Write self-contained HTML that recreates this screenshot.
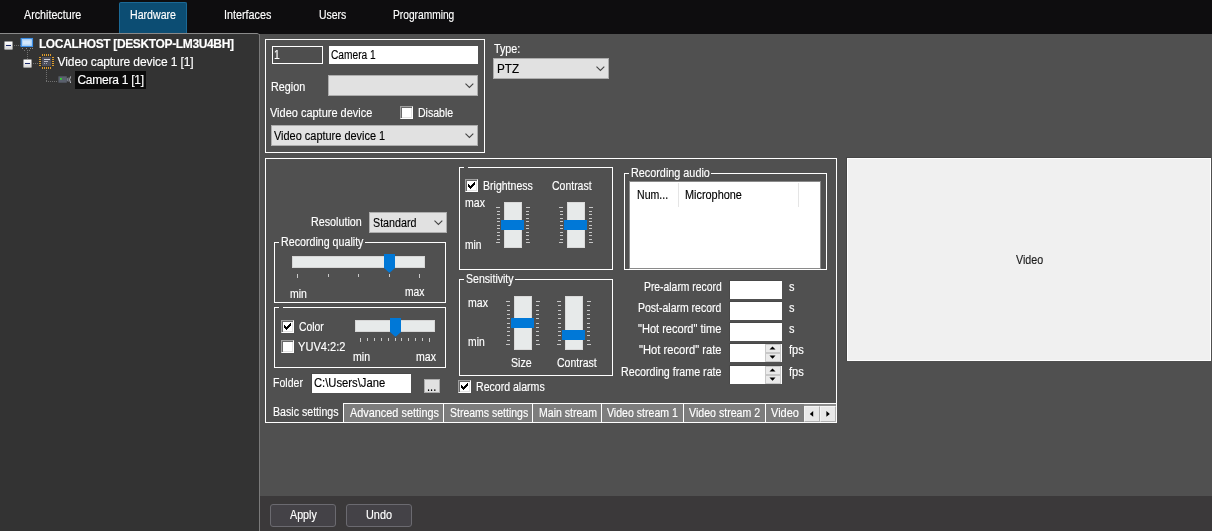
<!DOCTYPE html>
<html lang="en"><head><meta charset="utf-8"><title>Camera settings</title>
<style>
html,body{margin:0;padding:0}
body{width:1212px;height:531px;position:relative;overflow:hidden;background:#505050;font-family:'Liberation Sans', sans-serif;}
body div{position:absolute;}
.rg{display:block;position:absolute;left:0;top:0;width:0;height:0;}
.labels{left:0;top:0;width:1212px;height:531px;will-change:transform;}
.t{position:absolute;white-space:pre;font-family:'Liberation Sans', sans-serif;font-size:12px;line-height:14px;transform-origin:0 0;-webkit-text-stroke:0.15px currentColor;}
</style></head><body>
<nav class="rg" aria-label="Sections">
<div style="left:0px;top:0px;width:1212px;height:34px;background:#0e0d0f"></div>
<div style="left:119px;top:2px;width:68px;height:32px;background:#0c4d73;border:1px solid #1b6996;border-bottom:none;border-radius:2px 2px 0 0;box-sizing:border-box"></div>
<div class="labels">
<span class="t" style="left:24.4px;top:8px;color:#fff;transform:scaleX(0.893);">Architecture</span>
<span class="t" style="left:129.8px;top:8px;color:#fff;transform:scaleX(0.884);">Hardware</span>
<span class="t" style="left:223.7px;top:8px;color:#fff;transform:scaleX(0.899);">Interfaces</span>
<span class="t" style="left:318.8px;top:8px;color:#fff;transform:scaleX(0.871);">Users</span>
<span class="t" style="left:393.4px;top:8px;color:#fff;transform:scaleX(0.851);">Programming</span>
</div>
</nav>
<aside class="rg" aria-label="Object tree">
<div style="left:0px;top:33px;width:259px;height:498px;background:#333333;border-top:1px solid #8a8a8a;border-top-right-radius:2px;box-sizing:border-box"></div>
<div style="left:75px;top:71px;width:71px;height:18px;background:#0b0b0b"></div>
<div style="left:14px;top:45px;width:7px;height:1px;background:repeating-linear-gradient(90deg,#707070 0 1px,transparent 1px 2px)"></div>
<div style="left:27px;top:50px;width:1px;height:9px;background:repeating-linear-gradient(180deg,#707070 0 1px,transparent 1px 2px)"></div>
<div style="left:33px;top:63px;width:5px;height:1px;background:repeating-linear-gradient(90deg,#707070 0 1px,transparent 1px 2px)"></div>
<div style="left:46px;top:70px;width:1px;height:12px;background:repeating-linear-gradient(180deg,#707070 0 1px,transparent 1px 2px)"></div>
<div style="left:46px;top:81px;width:12px;height:1px;background:repeating-linear-gradient(90deg,#707070 0 1px,transparent 1px 2px)"></div>
<div style="left:4px;top:41px;width:9px;height:9px;background:linear-gradient(#fff,#d8d8d8);border:1px solid #9a9a9a;box-sizing:border-box;border-radius:1px"><div style="left:1px;top:3px;width:5px;height:1px;background:#1c2a6b"></div></div>
<div style="left:23px;top:59px;width:9px;height:9px;background:linear-gradient(#fff,#d8d8d8);border:1px solid #9a9a9a;box-sizing:border-box;border-radius:1px"><div style="left:1px;top:3px;width:5px;height:1px;background:#1c2a6b"></div></div>
<svg style="position:absolute;left:20px;top:37px" width="15" height="15" viewBox="0 0 15 15"><rect x="1.2" y="1.6" width="11.2" height="7.8" fill="#d3e7fa" stroke="#3c8ee6" stroke-width="1.3"/><rect x="2.6" y="3" width="8.4" height="5" fill="none" stroke="#a8cff4" stroke-width=".8"/><rect x="2" y="11" width="1" height="1" fill="#8a8a8a"/><rect x="6" y="11" width="1" height="1" fill="#8a8a8a"/><rect x="10" y="11" width="1" height="1" fill="#8a8a8a"/><rect x="12" y="11" width="1" height="1" fill="#8a8a8a"/><rect x="4" y="13" width="1" height="1" fill="#777"/><rect x="9" y="13" width="1" height="1" fill="#777"/></svg>
<svg style="position:absolute;left:38px;top:53px" width="17" height="17" viewBox="0 0 17 17" shape-rendering="crispEdges"><rect x="4" y="1" width="1" height="2" fill="#dc9c2c"/><rect x="4" y="14" width="1" height="2" fill="#dc9c2c"/><rect x="1" y="4" width="2" height="1" fill="#dc9c2c"/><rect x="14" y="4" width="2" height="1" fill="#dc9c2c"/><rect x="6" y="1" width="1" height="2" fill="#dc9c2c"/><rect x="6" y="14" width="1" height="2" fill="#dc9c2c"/><rect x="1" y="6" width="2" height="1" fill="#dc9c2c"/><rect x="14" y="6" width="2" height="1" fill="#dc9c2c"/><rect x="8" y="1" width="1" height="2" fill="#dc9c2c"/><rect x="8" y="14" width="1" height="2" fill="#dc9c2c"/><rect x="1" y="8" width="2" height="1" fill="#dc9c2c"/><rect x="14" y="8" width="2" height="1" fill="#dc9c2c"/><rect x="10" y="1" width="1" height="2" fill="#dc9c2c"/><rect x="10" y="14" width="1" height="2" fill="#dc9c2c"/><rect x="1" y="10" width="2" height="1" fill="#dc9c2c"/><rect x="14" y="10" width="2" height="1" fill="#dc9c2c"/><rect x="12" y="1" width="1" height="2" fill="#dc9c2c"/><rect x="12" y="14" width="1" height="2" fill="#dc9c2c"/><rect x="1" y="12" width="2" height="1" fill="#dc9c2c"/><rect x="14" y="12" width="2" height="1" fill="#dc9c2c"/><rect x="4" y="4" width="9" height="9" fill="#4d4f5c"/><rect x="6" y="6" width="6" height="1" fill="#d4d4dc"/><rect x="6" y="8" width="4" height="1" fill="#b9b9c4"/><rect x="6" y="10" width="1" height="1" fill="#a8a8b4"/><rect x="8" y="10" width="1" height="1" fill="#a8a8b4"/></svg>
<svg style="position:absolute;left:58px;top:75px" width="15" height="10" viewBox="0 0 15 10"><rect x="0.4" y="1.3" width="8.4" height="6.4" fill="#5a606d"/><path d="M8.8 3.4 L10.6 2.2 V7 L8.8 5.8 Z" fill="#777c88"/><path d="M12.6 1.4 Q10.6 4.5 12.6 8" fill="none" stroke="#c9ccd2" stroke-width=".9"/><rect x="2" y="3" width="1.8" height="1.8" fill="#35d835"/></svg>
<div class="labels">
<span class="t" style="left:38.9px;top:37px;letter-spacing:-0.36px;color:#ffffff;font-weight:700;">LOCALHOST [DESKTOP-LM3U4BH]</span>
<span class="t" style="left:57.6px;top:55px;letter-spacing:-0.10px;color:#fff;">Video capture device 1 [1]</span>
<span class="t" style="left:77.4px;top:73px;letter-spacing:-0.24px;color:#fff;">Camera 1 [1]</span>
</div>
</aside>
<main class="rg" aria-label="Camera settings">
<div style="left:259px;top:34px;width:1px;height:497px;background:#7a7a7a"></div>
<div style="left:265px;top:39px;width:220px;height:114px;border:1px solid #fff;box-sizing:border-box"></div>
<div style="left:265px;top:158px;width:572px;height:265px;border:1px solid #fff;box-sizing:border-box"></div>
<div style="left:274px;top:242px;width:172px;height:61px;border:1px solid #fff;box-sizing:border-box"></div><div style="left:279px;top:242px;width:86px;height:1px;background:#505050"></div>
<div style="left:274px;top:307px;width:172px;height:61px;border:1px solid #fff;box-sizing:border-box"></div><div style="left:279px;top:307px;width:4px;height:1px;background:#505050"></div>
<div style="left:459px;top:167px;width:154px;height:103px;border:1px solid #fff;box-sizing:border-box"></div><div style="left:464px;top:167px;width:4px;height:1px;background:#505050"></div>
<div style="left:459px;top:279px;width:154px;height:97px;border:1px solid #fff;box-sizing:border-box"></div><div style="left:464px;top:279px;width:51px;height:1px;background:#505050"></div>
<div style="left:624px;top:173px;width:203px;height:97px;border:1px solid #fff;box-sizing:border-box"></div><div style="left:629px;top:173px;width:82px;height:1px;background:#505050"></div>
<div style="left:272px;top:46px;width:51px;height:18px;border:1px solid #fff;background:#4e4e4e;box-sizing:border-box"></div>
<div style="left:329px;top:46px;width:149px;height:18px;background:#fff"></div>
<div style="left:328px;top:75px;width:150px;height:21px;background:#e1e1e1;border:1px solid #adadad;box-sizing:border-box"><svg style="position:absolute;left:135px;top:5.5px" width="11" height="8" viewBox="0 0 11 8"><path d="M1.5 1.6 L5.4 5.5 L9.3 1.6" fill="none" stroke="#444" stroke-width="1.1"/></svg></div>
<div style="left:271px;top:125px;width:207px;height:21px;background:#e1e1e1;border:1px solid #adadad;box-sizing:border-box"><svg style="position:absolute;left:192px;top:5.5px" width="11" height="8" viewBox="0 0 11 8"><path d="M1.5 1.6 L5.4 5.5 L9.3 1.6" fill="none" stroke="#444" stroke-width="1.1"/></svg></div>
<div style="left:493px;top:58px;width:116px;height:21px;background:#e1e1e1;border:1px solid #adadad;box-sizing:border-box"><svg style="position:absolute;left:101px;top:5.5px" width="11" height="8" viewBox="0 0 11 8"><path d="M1.5 1.6 L5.4 5.5 L9.3 1.6" fill="none" stroke="#444" stroke-width="1.1"/></svg></div>
<div style="left:369px;top:212px;width:78px;height:21px;background:#e1e1e1;border:1px solid #adadad;box-sizing:border-box"><svg style="position:absolute;left:63px;top:5.5px" width="11" height="8" viewBox="0 0 11 8"><path d="M1.5 1.6 L5.4 5.5 L9.3 1.6" fill="none" stroke="#444" stroke-width="1.1"/></svg></div>
<div style="left:400px;top:106px;width:13px;height:13px;background:#fff;border-style:solid;border-width:1px;border-color:#a0a0a0 #fff #fff #a0a0a0;box-sizing:border-box;box-shadow:inset 1px 1px 0 #696969, inset -1px -1px 0 #e3e3e3"></div>
<div style="left:281px;top:320px;width:13px;height:13px;background:#fff;border-style:solid;border-width:1px;border-color:#a0a0a0 #fff #fff #a0a0a0;box-sizing:border-box;box-shadow:inset 1px 1px 0 #696969, inset -1px -1px 0 #e3e3e3"><svg width="13" height="13" viewBox="0 0 13 13" shape-rendering="crispEdges" style="position:absolute;left:-1px;top:-1px"><rect x="3" y="5" width="1" height="3" fill="#000"/><rect x="4" y="6" width="1" height="3" fill="#000"/><rect x="5" y="7" width="1" height="3" fill="#000"/><rect x="6" y="6" width="1" height="3" fill="#000"/><rect x="7" y="5" width="1" height="3" fill="#000"/><rect x="8" y="4" width="1" height="3" fill="#000"/><rect x="9" y="3" width="1" height="3" fill="#000"/></svg></div>
<div style="left:281px;top:340px;width:13px;height:13px;background:#fff;border-style:solid;border-width:1px;border-color:#a0a0a0 #fff #fff #a0a0a0;box-sizing:border-box;box-shadow:inset 1px 1px 0 #696969, inset -1px -1px 0 #e3e3e3"></div>
<div style="left:465px;top:179px;width:13px;height:13px;background:#fff;border-style:solid;border-width:1px;border-color:#a0a0a0 #fff #fff #a0a0a0;box-sizing:border-box;box-shadow:inset 1px 1px 0 #696969, inset -1px -1px 0 #e3e3e3"><svg width="13" height="13" viewBox="0 0 13 13" shape-rendering="crispEdges" style="position:absolute;left:-1px;top:-1px"><rect x="3" y="5" width="1" height="3" fill="#000"/><rect x="4" y="6" width="1" height="3" fill="#000"/><rect x="5" y="7" width="1" height="3" fill="#000"/><rect x="6" y="6" width="1" height="3" fill="#000"/><rect x="7" y="5" width="1" height="3" fill="#000"/><rect x="8" y="4" width="1" height="3" fill="#000"/><rect x="9" y="3" width="1" height="3" fill="#000"/></svg></div>
<div style="left:458px;top:380px;width:13px;height:13px;background:#fff;border-style:solid;border-width:1px;border-color:#a0a0a0 #fff #fff #a0a0a0;box-sizing:border-box;box-shadow:inset 1px 1px 0 #696969, inset -1px -1px 0 #e3e3e3"><svg width="13" height="13" viewBox="0 0 13 13" shape-rendering="crispEdges" style="position:absolute;left:-1px;top:-1px"><rect x="3" y="5" width="1" height="3" fill="#000"/><rect x="4" y="6" width="1" height="3" fill="#000"/><rect x="5" y="7" width="1" height="3" fill="#000"/><rect x="6" y="6" width="1" height="3" fill="#000"/><rect x="7" y="5" width="1" height="3" fill="#000"/><rect x="8" y="4" width="1" height="3" fill="#000"/><rect x="9" y="3" width="1" height="3" fill="#000"/></svg></div>
<div style="left:292px;top:256px;width:133px;height:12px;background:#e7eaea;border:1px solid #d6d6d6;box-sizing:border-box"></div><svg style="position:absolute;left:384px;top:254px" width="11" height="19" viewBox="0 0 11 19"><path d="M0 0 H11 V14 L6.0 18.5 L5.0 18.5 L0 14 Z" fill="#0078d7"/></svg><div style="left:297px;top:274px;width:1px;height:4px;background:#c9c9c9"></div><div style="left:328px;top:274px;width:1px;height:3px;background:#c9c9c9"></div><div style="left:358px;top:274px;width:1px;height:3px;background:#c9c9c9"></div><div style="left:389px;top:274px;width:1px;height:3px;background:#c9c9c9"></div><div style="left:419px;top:274px;width:1px;height:4px;background:#c9c9c9"></div>
<div style="left:355px;top:320px;width:80px;height:12px;background:#e7eaea;border:1px solid #d6d6d6;box-sizing:border-box"></div><svg style="position:absolute;left:390px;top:318px" width="11" height="19" viewBox="0 0 11 19"><path d="M0 0 H11 V14 L6.0 18.5 L5.0 18.5 L0 14 Z" fill="#0078d7"/></svg><div style="left:360px;top:338px;width:1px;height:4px;background:#c9c9c9"></div><div style="left:367px;top:338px;width:1px;height:3px;background:#c9c9c9"></div><div style="left:374px;top:338px;width:1px;height:3px;background:#c9c9c9"></div><div style="left:381px;top:338px;width:1px;height:3px;background:#c9c9c9"></div><div style="left:388px;top:338px;width:1px;height:3px;background:#c9c9c9"></div><div style="left:395px;top:338px;width:1px;height:3px;background:#c9c9c9"></div><div style="left:401px;top:338px;width:1px;height:3px;background:#c9c9c9"></div><div style="left:408px;top:338px;width:1px;height:3px;background:#c9c9c9"></div><div style="left:415px;top:338px;width:1px;height:3px;background:#c9c9c9"></div><div style="left:422px;top:338px;width:1px;height:3px;background:#c9c9c9"></div><div style="left:429px;top:338px;width:1px;height:4px;background:#c9c9c9"></div>
<div style="left:504px;top:202px;width:18px;height:46px;background:#e7eaea;border:1px solid #d9d9d9;box-sizing:border-box"></div><div style="left:501px;top:220px;width:23px;height:10px;background:#0078d7"></div><div style="left:496px;top:207px;width:4px;height:1px;background:#c6c6c6"></div><div style="left:526px;top:207px;width:4px;height:1px;background:#c6c6c6"></div><div style="left:497px;top:211px;width:3px;height:1px;background:#c6c6c6"></div><div style="left:526px;top:211px;width:3px;height:1px;background:#c6c6c6"></div><div style="left:497px;top:214px;width:3px;height:1px;background:#c6c6c6"></div><div style="left:526px;top:214px;width:3px;height:1px;background:#c6c6c6"></div><div style="left:497px;top:218px;width:3px;height:1px;background:#c6c6c6"></div><div style="left:526px;top:218px;width:3px;height:1px;background:#c6c6c6"></div><div style="left:497px;top:221px;width:3px;height:1px;background:#c6c6c6"></div><div style="left:526px;top:221px;width:3px;height:1px;background:#c6c6c6"></div><div style="left:497px;top:225px;width:3px;height:1px;background:#c6c6c6"></div><div style="left:526px;top:225px;width:3px;height:1px;background:#c6c6c6"></div><div style="left:497px;top:228px;width:3px;height:1px;background:#c6c6c6"></div><div style="left:526px;top:228px;width:3px;height:1px;background:#c6c6c6"></div><div style="left:497px;top:232px;width:3px;height:1px;background:#c6c6c6"></div><div style="left:526px;top:232px;width:3px;height:1px;background:#c6c6c6"></div><div style="left:497px;top:235px;width:3px;height:1px;background:#c6c6c6"></div><div style="left:526px;top:235px;width:3px;height:1px;background:#c6c6c6"></div><div style="left:497px;top:239px;width:3px;height:1px;background:#c6c6c6"></div><div style="left:526px;top:239px;width:3px;height:1px;background:#c6c6c6"></div><div style="left:496px;top:242px;width:4px;height:1px;background:#c6c6c6"></div><div style="left:526px;top:242px;width:4px;height:1px;background:#c6c6c6"></div>
<div style="left:567px;top:202px;width:18px;height:46px;background:#e7eaea;border:1px solid #d9d9d9;box-sizing:border-box"></div><div style="left:564px;top:220px;width:23px;height:10px;background:#0078d7"></div><div style="left:559px;top:207px;width:4px;height:1px;background:#c6c6c6"></div><div style="left:589px;top:207px;width:4px;height:1px;background:#c6c6c6"></div><div style="left:560px;top:211px;width:3px;height:1px;background:#c6c6c6"></div><div style="left:589px;top:211px;width:3px;height:1px;background:#c6c6c6"></div><div style="left:560px;top:214px;width:3px;height:1px;background:#c6c6c6"></div><div style="left:589px;top:214px;width:3px;height:1px;background:#c6c6c6"></div><div style="left:560px;top:218px;width:3px;height:1px;background:#c6c6c6"></div><div style="left:589px;top:218px;width:3px;height:1px;background:#c6c6c6"></div><div style="left:560px;top:221px;width:3px;height:1px;background:#c6c6c6"></div><div style="left:589px;top:221px;width:3px;height:1px;background:#c6c6c6"></div><div style="left:560px;top:225px;width:3px;height:1px;background:#c6c6c6"></div><div style="left:589px;top:225px;width:3px;height:1px;background:#c6c6c6"></div><div style="left:560px;top:228px;width:3px;height:1px;background:#c6c6c6"></div><div style="left:589px;top:228px;width:3px;height:1px;background:#c6c6c6"></div><div style="left:560px;top:232px;width:3px;height:1px;background:#c6c6c6"></div><div style="left:589px;top:232px;width:3px;height:1px;background:#c6c6c6"></div><div style="left:560px;top:235px;width:3px;height:1px;background:#c6c6c6"></div><div style="left:589px;top:235px;width:3px;height:1px;background:#c6c6c6"></div><div style="left:560px;top:239px;width:3px;height:1px;background:#c6c6c6"></div><div style="left:589px;top:239px;width:3px;height:1px;background:#c6c6c6"></div><div style="left:559px;top:242px;width:4px;height:1px;background:#c6c6c6"></div><div style="left:589px;top:242px;width:4px;height:1px;background:#c6c6c6"></div>
<div style="left:514px;top:296px;width:18px;height:54px;background:#e7eaea;border:1px solid #d9d9d9;box-sizing:border-box"></div><div style="left:511px;top:318px;width:23px;height:10px;background:#0078d7"></div><div style="left:506px;top:301px;width:4px;height:1px;background:#c6c6c6"></div><div style="left:536px;top:301px;width:4px;height:1px;background:#c6c6c6"></div><div style="left:507px;top:305px;width:3px;height:1px;background:#c6c6c6"></div><div style="left:536px;top:305px;width:3px;height:1px;background:#c6c6c6"></div><div style="left:507px;top:310px;width:3px;height:1px;background:#c6c6c6"></div><div style="left:536px;top:310px;width:3px;height:1px;background:#c6c6c6"></div><div style="left:507px;top:314px;width:3px;height:1px;background:#c6c6c6"></div><div style="left:536px;top:314px;width:3px;height:1px;background:#c6c6c6"></div><div style="left:507px;top:318px;width:3px;height:1px;background:#c6c6c6"></div><div style="left:536px;top:318px;width:3px;height:1px;background:#c6c6c6"></div><div style="left:507px;top:323px;width:3px;height:1px;background:#c6c6c6"></div><div style="left:536px;top:323px;width:3px;height:1px;background:#c6c6c6"></div><div style="left:507px;top:327px;width:3px;height:1px;background:#c6c6c6"></div><div style="left:536px;top:327px;width:3px;height:1px;background:#c6c6c6"></div><div style="left:507px;top:331px;width:3px;height:1px;background:#c6c6c6"></div><div style="left:536px;top:331px;width:3px;height:1px;background:#c6c6c6"></div><div style="left:507px;top:335px;width:3px;height:1px;background:#c6c6c6"></div><div style="left:536px;top:335px;width:3px;height:1px;background:#c6c6c6"></div><div style="left:507px;top:340px;width:3px;height:1px;background:#c6c6c6"></div><div style="left:536px;top:340px;width:3px;height:1px;background:#c6c6c6"></div><div style="left:506px;top:344px;width:4px;height:1px;background:#c6c6c6"></div><div style="left:536px;top:344px;width:4px;height:1px;background:#c6c6c6"></div>
<div style="left:565px;top:296px;width:18px;height:54px;background:#e7eaea;border:1px solid #d9d9d9;box-sizing:border-box"></div><div style="left:562px;top:330px;width:23px;height:10px;background:#0078d7"></div><div style="left:557px;top:301px;width:4px;height:1px;background:#c6c6c6"></div><div style="left:587px;top:301px;width:4px;height:1px;background:#c6c6c6"></div><div style="left:558px;top:305px;width:3px;height:1px;background:#c6c6c6"></div><div style="left:587px;top:305px;width:3px;height:1px;background:#c6c6c6"></div><div style="left:558px;top:310px;width:3px;height:1px;background:#c6c6c6"></div><div style="left:587px;top:310px;width:3px;height:1px;background:#c6c6c6"></div><div style="left:558px;top:314px;width:3px;height:1px;background:#c6c6c6"></div><div style="left:587px;top:314px;width:3px;height:1px;background:#c6c6c6"></div><div style="left:558px;top:318px;width:3px;height:1px;background:#c6c6c6"></div><div style="left:587px;top:318px;width:3px;height:1px;background:#c6c6c6"></div><div style="left:558px;top:323px;width:3px;height:1px;background:#c6c6c6"></div><div style="left:587px;top:323px;width:3px;height:1px;background:#c6c6c6"></div><div style="left:558px;top:327px;width:3px;height:1px;background:#c6c6c6"></div><div style="left:587px;top:327px;width:3px;height:1px;background:#c6c6c6"></div><div style="left:558px;top:331px;width:3px;height:1px;background:#c6c6c6"></div><div style="left:587px;top:331px;width:3px;height:1px;background:#c6c6c6"></div><div style="left:558px;top:335px;width:3px;height:1px;background:#c6c6c6"></div><div style="left:587px;top:335px;width:3px;height:1px;background:#c6c6c6"></div><div style="left:558px;top:340px;width:3px;height:1px;background:#c6c6c6"></div><div style="left:587px;top:340px;width:3px;height:1px;background:#c6c6c6"></div><div style="left:557px;top:344px;width:4px;height:1px;background:#c6c6c6"></div><div style="left:587px;top:344px;width:4px;height:1px;background:#c6c6c6"></div>
<div style="left:311px;top:373px;width:100px;height:20px;background:#fff;border:1px solid #484848;border-width:1px 0 0 1px;box-sizing:border-box"></div>
<div style="left:424px;top:379px;width:16px;height:14px;background:#e1e1e1;border:1px solid #adadad;box-sizing:border-box"></div>
<div style="left:629px;top:181px;width:192px;height:88px;background:#fff;border:1px solid #8a8a8a;box-sizing:border-box"></div>
<div style="left:678px;top:183px;width:1px;height:24px;background:#e5e5e5"></div>
<div style="left:798px;top:183px;width:1px;height:24px;background:#e5e5e5"></div>
<div style="left:729px;top:280px;width:53px;height:19px;background:#fff;border:1px solid #484848;border-width:1px 0 0 1px;box-sizing:border-box"></div>
<div style="left:729px;top:301px;width:53px;height:19px;background:#fff;border:1px solid #484848;border-width:1px 0 0 1px;box-sizing:border-box"></div>
<div style="left:729px;top:322px;width:53px;height:19px;background:#fff;border:1px solid #484848;border-width:1px 0 0 1px;box-sizing:border-box"></div>
<div style="left:729px;top:343px;width:53px;height:19px;background:#fff;border:1px solid #484848;border-width:1px 0 0 1px;box-sizing:border-box"></div>
<div style="left:729px;top:365px;width:53px;height:19px;background:#fff;border:1px solid #484848;border-width:1px 0 0 1px;box-sizing:border-box"></div>
<div style="left:765px;top:344px;width:16px;height:9px;background:#eaeaea;border:1px solid #c8c8c8;box-sizing:border-box"><svg width="15" height="8" viewBox="0 0 15 8" style="position:absolute;left:-1px;top:-1px"><path d="M4.5 5.6 L7.5 2.4 L10.5 5.6 Z" fill="#000"/></svg></div>
<div style="left:765px;top:353px;width:16px;height:9px;background:#eaeaea;border:1px solid #c8c8c8;box-sizing:border-box"><svg width="15" height="8" viewBox="0 0 15 8" style="position:absolute;left:-1px;top:-1px"><path d="M4.5 2.6 L7.5 5.8 L10.5 2.6 Z" fill="#000"/></svg></div>
<div style="left:765px;top:366px;width:16px;height:9px;background:#eaeaea;border:1px solid #c8c8c8;box-sizing:border-box"><svg width="15" height="8" viewBox="0 0 15 8" style="position:absolute;left:-1px;top:-1px"><path d="M4.5 5.6 L7.5 2.4 L10.5 5.6 Z" fill="#000"/></svg></div>
<div style="left:765px;top:375px;width:16px;height:9px;background:#eaeaea;border:1px solid #c8c8c8;box-sizing:border-box"><svg width="15" height="8" viewBox="0 0 15 8" style="position:absolute;left:-1px;top:-1px"><path d="M4.5 2.6 L7.5 5.8 L10.5 2.6 Z" fill="#000"/></svg></div>
<div style="left:343px;top:403px;width:101px;height:19px;background:#7d7d7d;border:1px solid #fff;border-bottom:none;box-sizing:border-box"></div>
<div style="left:443px;top:403px;width:90px;height:19px;background:#7d7d7d;border:1px solid #fff;border-bottom:none;box-sizing:border-box"></div>
<div style="left:532px;top:403px;width:70px;height:19px;background:#7d7d7d;border:1px solid #fff;border-bottom:none;box-sizing:border-box"></div>
<div style="left:601px;top:403px;width:83px;height:19px;background:#7d7d7d;border:1px solid #fff;border-bottom:none;box-sizing:border-box"></div>
<div style="left:683px;top:403px;width:83px;height:19px;background:#7d7d7d;border:1px solid #fff;border-bottom:none;box-sizing:border-box"></div>
<div style="left:765px;top:403px;width:40px;height:19px;background:#7d7d7d;border:1px solid #fff;border-bottom:none;box-sizing:border-box"></div>
<div style="left:804px;top:403px;width:32px;height:1px;background:#fff"></div>
<div style="left:804px;top:404px;width:32px;height:18px;background:#8c8c8c"></div>
<div style="left:804px;top:406px;width:16px;height:16px;background:#e9e9e9;border:1px solid #b8b8b8;border-color:#f4f4f4 #b0b0b0 #b0b0b0 #f4f4f4;box-sizing:border-box"><svg width="16" height="16" viewBox="0 0 16 16" style="position:absolute;left:-1px;top:-1px"><path d="M9.2 5 L5.8 7.9 L9.2 10.8 Z" fill="#000"/></svg></div>
<div style="left:820px;top:406px;width:16px;height:16px;background:#e9e9e9;border:1px solid #b8b8b8;border-color:#f4f4f4 #b0b0b0 #b0b0b0 #f4f4f4;box-sizing:border-box"><svg width="16" height="16" viewBox="0 0 16 16" style="position:absolute;left:-1px;top:-1px"><path d="M6.4 5 L9.8 7.9 L6.4 10.8 Z" fill="#000"/></svg></div>
<div style="left:846px;top:157px;width:365px;height:204px;border:1px solid #464646;border-width:1px 0 0 1px;box-sizing:border-box"></div>
<div style="left:847px;top:158px;width:364px;height:203px;background:#f0f0f0;border:1px solid #fff;box-sizing:border-box"></div>
<div class="labels">
<span class="t" style="left:273.8px;top:48px;color:#fff;transform:scaleX(0.867);">1</span>
<span class="t" style="left:330.9px;top:48px;color:#000000;transform:scaleX(0.848);">Camera 1</span>
<span class="t" style="left:271.4px;top:80px;color:#fff;transform:scaleX(0.899);">Region</span>
<span class="t" style="left:270.4px;top:106px;color:#fff;transform:scaleX(0.914);">Video capture device</span>
<span class="t" style="left:418.4px;top:106px;color:#fff;transform:scaleX(0.879);">Disable</span>
<span class="t" style="left:274.4px;top:129px;color:#000000;transform:scaleX(0.912);">Video capture device 1</span>
<span class="t" style="left:493.7px;top:42px;color:#fff;transform:scaleX(0.892);">Type:</span>
<span class="t" style="left:496.8px;top:62px;color:#000000;transform:scaleX(0.975);">PTZ</span>
<span class="t" style="left:310.8px;top:215px;color:#fff;transform:scaleX(0.896);">Resolution</span>
<span class="t" style="left:372.9px;top:216px;color:#000000;transform:scaleX(0.893);">Standard</span>
<span class="t" style="left:280.9px;top:235px;color:#fff;transform:scaleX(0.889);">Recording quality</span>
<span class="t" style="left:290.1px;top:287px;color:#fff;transform:scaleX(0.874);">min</span>
<span class="t" style="left:405.2px;top:285px;color:#fff;transform:scaleX(0.856);">max</span>
<span class="t" style="left:298.8px;top:320px;color:#fff;transform:scaleX(0.864);">Color</span>
<span class="t" style="left:298.4px;top:340px;color:#fff;transform:scaleX(0.925);">YUV4:2:2</span>
<span class="t" style="left:353.0px;top:350px;color:#fff;transform:scaleX(0.879);">min</span>
<span class="t" style="left:416.0px;top:350px;color:#fff;transform:scaleX(0.878);">max</span>
<span class="t" style="left:273.0px;top:376px;color:#fff;transform:scaleX(0.879);">Folder</span>
<span class="t" style="left:313.7px;top:376px;color:#000000;transform:scaleX(0.936);">C:\Users\Jane</span>
<span class="t" style="left:427.4px;top:380px;color:#000000;transform:scaleX(0.919);">...</span>
<span class="t" style="left:482.8px;top:179px;color:#fff;transform:scaleX(0.878);">Brightness</span>
<span class="t" style="left:552.1px;top:179px;color:#fff;transform:scaleX(0.873);">Contrast</span>
<span class="t" style="left:465.1px;top:196px;color:#fff;transform:scaleX(0.878);">max</span>
<span class="t" style="left:465.1px;top:238px;color:#fff;transform:scaleX(0.853);">min</span>
<span class="t" style="left:465.9px;top:272px;color:#fff;transform:scaleX(0.881);">Sensitivity</span>
<span class="t" style="left:467.9px;top:296px;color:#fff;transform:scaleX(0.878);">max</span>
<span class="t" style="left:467.9px;top:335px;color:#fff;transform:scaleX(0.863);">min</span>
<span class="t" style="left:511.0px;top:356px;color:#fff;transform:scaleX(0.887);">Size</span>
<span class="t" style="left:557.0px;top:356px;color:#fff;transform:scaleX(0.875);">Contrast</span>
<span class="t" style="left:475.9px;top:380px;color:#fff;transform:scaleX(0.880);">Record alarms</span>
<span class="t" style="left:631.0px;top:166px;color:#fff;transform:scaleX(0.902);">Recording audio</span>
<span class="t" style="left:637.0px;top:188px;color:#000000;transform:scaleX(0.880);">Num...</span>
<span class="t" style="left:684.9px;top:188px;color:#000000;transform:scaleX(0.907);">Microphone</span>
<span class="t" style="left:643.7px;top:280px;color:#fff;transform:scaleX(0.863);">Pre-alarm record</span>
<span class="t" style="left:638.0px;top:301px;color:#fff;transform:scaleX(0.874);">Post-alarm record</span>
<span class="t" style="left:638.0px;top:322px;color:#fff;transform:scaleX(0.921);">"Hot record" time</span>
<span class="t" style="left:638.9px;top:343px;color:#fff;transform:scaleX(0.932);">"Hot record" rate</span>
<span class="t" style="left:620.8px;top:365px;color:#fff;transform:scaleX(0.892);">Recording frame rate</span>
<span class="t" style="left:789.1px;top:280px;color:#fff;transform:scaleX(0.917);">s</span>
<span class="t" style="left:789.1px;top:301px;color:#fff;transform:scaleX(0.917);">s</span>
<span class="t" style="left:789.1px;top:322px;color:#fff;transform:scaleX(0.917);">s</span>
<span class="t" style="left:789.1px;top:343px;color:#fff;transform:scaleX(0.924);">fps</span>
<span class="t" style="left:789.1px;top:365px;color:#fff;transform:scaleX(0.924);">fps</span>
<span class="t" style="left:273.0px;top:405px;color:#fff;transform:scaleX(0.885);">Basic settings</span>
<span class="t" style="left:349.7px;top:406px;color:#fff;transform:scaleX(0.907);">Advanced settings</span>
<span class="t" style="left:449.8px;top:406px;color:#fff;transform:scaleX(0.875);">Streams settings</span>
<span class="t" style="left:538.9px;top:406px;color:#fff;transform:scaleX(0.878);">Main stream</span>
<span class="t" style="left:607.2px;top:406px;color:#fff;transform:scaleX(0.881);">Video stream 1</span>
<span class="t" style="left:689.4px;top:406px;color:#fff;transform:scaleX(0.884);">Video stream 2</span>
<span class="t" style="left:771.4px;top:406px;color:#fff;transform:scaleX(0.915);">Video</span>
<span class="t" style="left:1016.0px;top:253px;color:#1b1b1b;transform:scaleX(0.892);">Video</span>
</div>
</main>
<footer class="rg" aria-label="Actions">
<div style="left:260px;top:496px;width:952px;height:35px;background:#3b393a"></div>
<div style="left:270px;top:504px;width:66px;height:23px;background:#444247;border:1px solid #6b6a70;border-radius:3px;box-sizing:border-box"></div>
<div style="left:346px;top:504px;width:66px;height:23px;background:#444247;border:1px solid #6b6a70;border-radius:3px;box-sizing:border-box"></div>
<div class="labels">
<span class="t" style="left:289.5px;top:508px;color:#fff;transform:scaleX(0.892);">Apply</span>
<span class="t" style="left:365.9px;top:508px;color:#fff;transform:scaleX(0.906);">Undo</span>
</div>
</footer>
</body></html>
